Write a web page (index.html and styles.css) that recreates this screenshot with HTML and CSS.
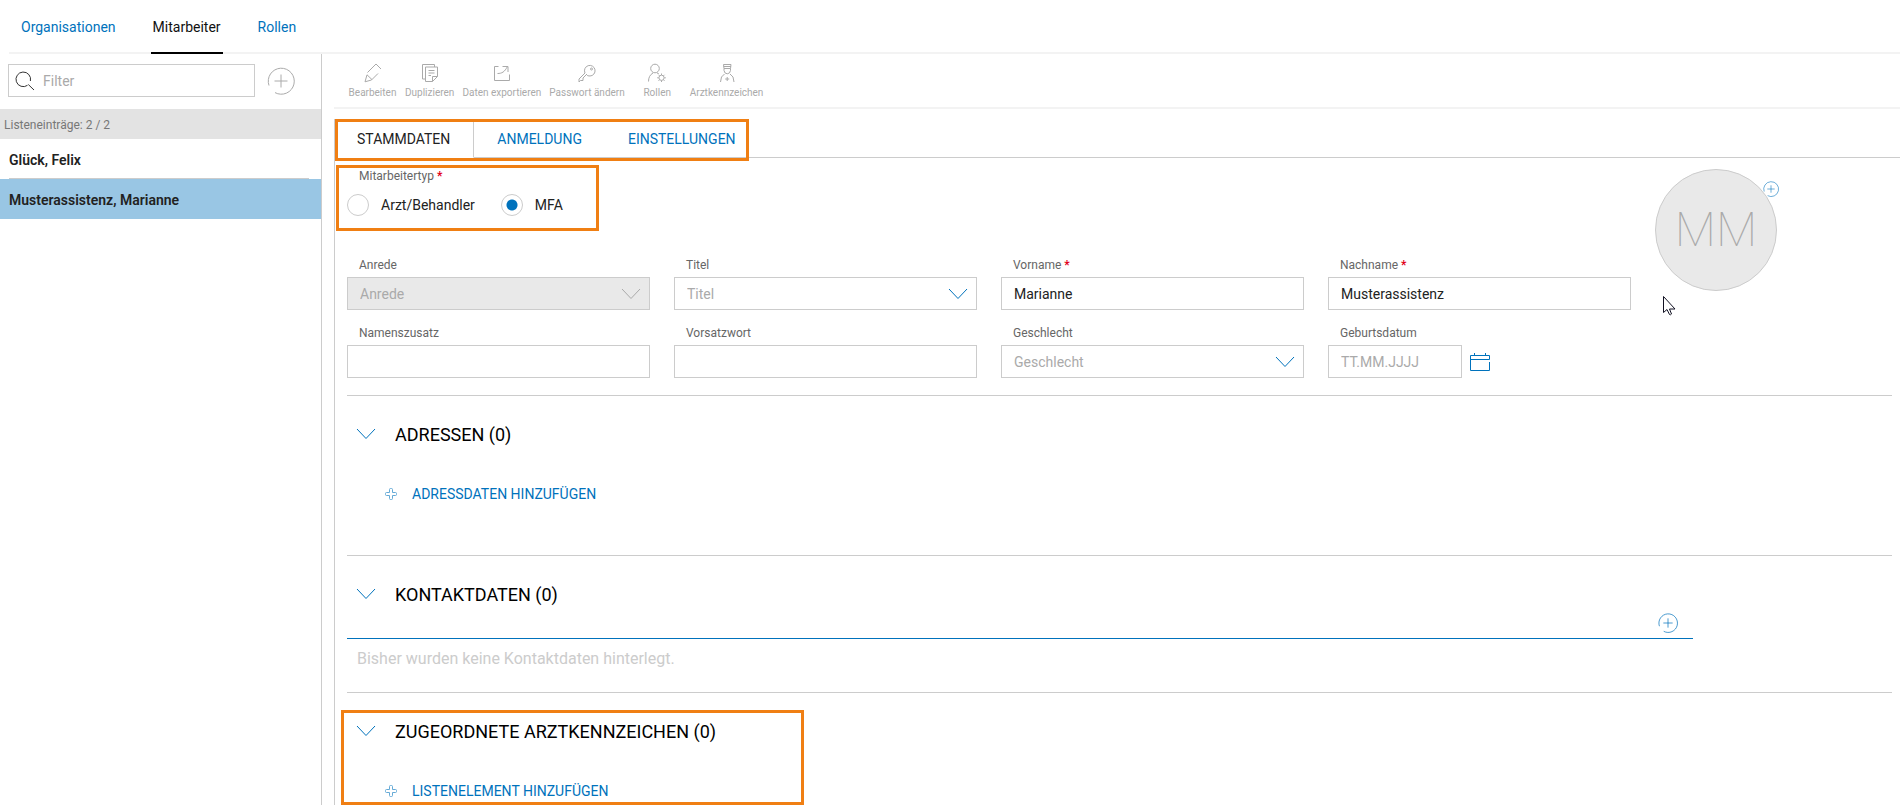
FILE: index.html
```
<!DOCTYPE html>
<html lang="de">
<head>
<meta charset="utf-8">
<title>Mitarbeiter</title>
<link rel="stylesheet" href="styles.css">
</head>
<body>
<svg class="defs" aria-hidden="true">
  <symbol id="chevron" viewBox="0 0 20 12"><path d="M1 1l9 9.500 9-9.500"/></symbol>
  <symbol id="circle-plus" viewBox="0 0 28 28"><path d="M2 18.500A13 13 0 1 1 8 25.600M14 7.500v13M7.500 14h13"/></symbol>
  <symbol id="cross" viewBox="0 0 12 12"><path d="M4.500 4.500v-3q0-1 1-1h1q1 0 1 1v3h3q1 0 1 1v1q0 1-1 1h-3v3q0 1-1 1h-1q-1 0-1-1v-3h-3q-1 0-1-1v-1q0-1 1-1z"/></symbol>
</svg>
<div class="app">
  <nav class="main-nav">
    <a class="main-nav-link" href="#organisationen">Organisationen</a>
    <a class="main-nav-link is-active" href="#mitarbeiter" aria-current="page">Mitarbeiter</a>
    <a class="main-nav-link" href="#rollen">Rollen</a>
  </nav>
  <div class="workspace">
    <aside class="sidebar">
      <div class="search-row">
        <div class="search">
          <svg class="search-icon" viewBox="0 0 20 20" aria-hidden="true"><path d="M12.500 14.300A7.300 7.300 0 1 1 15.400 10M13.300 13.500l5.700 5.500"/></svg>
          <input class="search-input" type="text" placeholder="Filter" aria-label="Filter">
        </div>
        <button class="icon-button" type="button" aria-label="Neuer Mitarbeiter"><svg class="icon-add"><use href="#circle-plus"/></svg></button>
      </div>
      <p class="list-count">Listeneinträge: 2 / 2</p>
      <ul class="people">
        <li class="person"><a class="person-link" href="#felix">Glück, Felix</a></li>
        <li class="person is-selected"><a class="person-link" href="#marianne">Musterassistenz, Marianne</a></li>
      </ul>
    </aside>
    <main class="content">
      <div class="toolbar">
        <button class="tool" type="button"><svg class="tool-icon" viewBox="0 0 20 20" aria-hidden="true"><path d="M4.500 9.500l8.500-8.500 5 5M15 10.500l-6.500 6.500-6.500 1.800 2-7 5 4.800"/></svg>Bearbeiten</button>
        <button class="tool" type="button"><svg class="tool-icon" viewBox="0 0 20 20" aria-hidden="true"><path d="M5 16H2.500V1.500h12V4M12.500 18.500H5.500V4h12v9.500l-5 5v-5h5M8.500 7.500h6M8.500 10h6M8.500 12.500h2.500"/></svg>Duplizieren</button>
        <button class="tool" type="button"><svg class="tool-icon" viewBox="0 0 20 20" aria-hidden="true"><path d="M6.500 3.500h-4v14h15v-6M5.500 10.500c4.500 0 7-1.500 10-7M10.500 3.500h5.500v5.500"/></svg>Daten exportieren</button>
        <button class="tool" type="button"><svg class="tool-icon" viewBox="0 0 20 20" aria-hidden="true"><path d="M9.500 11.500l-3.500 3.500v2.500H3.500l-1.500 1.500v-3l6-6A5.300 5.300 0 1 1 13 13q-2.500.500-4-2"/><circle cx="14.500" cy="6" r="1"/></svg>Passwort ändern</button>
        <button class="tool" type="button"><svg class="tool-icon" viewBox="0 0 20 20" aria-hidden="true"><circle cx="8" cy="5.500" r="4.300"/><path d="M1.500 18.500q0-6 4.500-8.500M10 10q1.500.500 2 1M14.500 10.500v1.500M14.500 17.500v1.500M10.200 14.800h1.500M17.300 14.800h1.500M11.500 11.800l1 1M16.500 16.800l1 1M17.500 11.800l-1 1M12.500 16.800l-1 1"/><circle cx="14.500" cy="14.800" r="2.600"/></svg>Rollen</button>
        <button class="tool" type="button"><svg class="tool-icon" viewBox="0 0 20 20" aria-hidden="true"><path d="M6.500 1.500h7.500l-.500 4h-6.500zM6.500 3.500h7.500M7 5.500v2a3.300 4 0 0 0 6.500 0v-2M7.500 11q-4 2-4 8M13 11q4 2 4 8M10.200 14v4M8.200 16h4"/></svg>Arztkennzeichen</button>
      </div>
      <div class="panel">
        <div class="tab-bar">
          <div class="tabs" role="tablist">
            <button class="tab is-active" type="button" role="tab" aria-selected="true">STAMMDATEN</button>
            <button class="tab" type="button" role="tab" aria-selected="false">ANMELDUNG</button>
            <button class="tab" type="button" role="tab" aria-selected="false">EINSTELLUNGEN</button>
            <span class="marker marker-tabs"></span>
          </div>
        </div>
        <form class="form">
          <div class="person-form">
            <div class="person-fields">
              <fieldset class="type">
                <legend class="type-legend">Mitarbeitertyp <span class="required">*</span></legend>
                <div class="type-options">
                  <label class="option"><input class="radio" type="radio" name="typ">Arzt/Behandler</label>
                  <label class="option"><input class="radio" type="radio" name="typ" checked>MFA</label>
                </div>
                <span class="marker marker-type"></span>
              </fieldset>
              <div class="fields">
                <div class="field">
                  <label class="label" for="anrede">Anrede</label>
                  <div class="select-box"><select class="control select" id="anrede" disabled><option>Anrede</option></select><svg class="chevron"><use href="#chevron"/></svg></div>
                </div>
                <div class="field">
                  <label class="label" for="titel">Titel</label>
                  <div class="select-box"><select class="control select" id="titel"><option>Titel</option></select><svg class="chevron"><use href="#chevron"/></svg></div>
                </div>
                <div class="field">
                  <label class="label" for="vorname">Vorname <span class="required">*</span></label>
                  <input class="control" id="vorname" type="text" value="Marianne">
                </div>
                <div class="field">
                  <label class="label" for="nachname">Nachname <span class="required">*</span></label>
                  <input class="control" id="nachname" type="text" value="Musterassistenz">
                </div>
                <div class="field">
                  <label class="label" for="zusatz">Namenszusatz</label>
                  <input class="control" id="zusatz" type="text">
                </div>
                <div class="field">
                  <label class="label" for="vorsatz">Vorsatzwort</label>
                  <input class="control" id="vorsatz" type="text">
                </div>
                <div class="field">
                  <label class="label" for="geschlecht">Geschlecht</label>
                  <div class="select-box"><select class="control select" id="geschlecht"><option>Geschlecht</option></select><svg class="chevron"><use href="#chevron"/></svg></div>
                </div>
                <div class="field">
                  <label class="label" for="geburt">Geburtsdatum</label>
                  <div class="date">
                    <input class="control date-input" id="geburt" type="text" placeholder="TT.MM.JJJJ">
                    <button class="icon-button" type="button" aria-label="Kalender"><svg class="calendar" viewBox="0 0 20 20"><path d="M19.500 10v8.500H.500v-15h19v4H.500M4.500 1v2.500M15.500 1v2.500"/></svg></button>
                  </div>
                </div>
              </div>
            </div>
            <div class="portrait">
              <div class="avatar">MM<button class="icon-button avatar-add" type="button" aria-label="Bild hinzufügen"><svg class="icon-add-small"><use href="#circle-plus"/></svg></button></div>
              <svg class="pointer" viewBox="0 0 13 20" aria-hidden="true"><path d="M.500.500v16l3.500-3 2.500 5q1 .800 2-.500l-2-5h5.500z"/></svg>
            </div>
          </div>
          <section class="section">
            <h2 class="section-title"><button class="section-toggle" type="button"><svg class="section-chevron"><use href="#chevron"/></svg>ADRESSEN (0)</button></h2>
            <button class="add-link" type="button"><svg class="cross"><use href="#cross"/></svg>ADRESSDATEN HINZUFÜGEN</button>
          </section>
          <section class="section">
            <h2 class="section-title"><button class="section-toggle" type="button"><svg class="section-chevron"><use href="#chevron"/></svg>KONTAKTDATEN (0)</button></h2>
            <div class="contact-head"><button class="icon-button" type="button" aria-label="Kontaktdaten hinzufügen"><svg class="icon-add-medium"><use href="#circle-plus"/></svg></button></div>
            <p class="empty">Bisher wurden keine Kontaktdaten hinterlegt.</p>
          </section>
          <section class="section">
            <h2 class="section-title"><button class="section-toggle" type="button"><svg class="section-chevron"><use href="#chevron"/></svg>ZUGEORDNETE ARZTKENNZEICHEN (0)</button></h2>
            <button class="add-link" type="button"><svg class="cross"><use href="#cross"/></svg>LISTENELEMENT HINZUFÜGEN</button>
            <span class="marker marker-section"></span>
          </section>
        </form>
      </div>
    </main>
  </div>
</div>
</body>
</html>
```

FILE: styles.css
```
* {
  box-sizing: border-box;
}

body {
  margin: 0;
  background: #fff;
  color: #222;
  font: 14px/20px Roboto, "Liberation Sans", sans-serif;
}

button,
input,
select {
  font: inherit;
  color: inherit;
  margin: 0;
}

button {
  padding: 0;
  border: 0;
  background: none;
  cursor: pointer;
}

svg {
  display: block;
  fill: none;
  stroke: currentColor;
}

.defs {
  position: absolute;
  width: 0;
  height: 0;
}

.app {
  display: flex;
  flex-direction: column;
  height: 100vh;
  overflow: hidden;
}

/* Main navigation */
.main-nav {
  display: flex;
  gap: 33px;
  margin-left: 9px;
  padding-left: 10px;
  border-bottom: 2px solid #f3f3f3;
}

.main-nav-link {
  margin-bottom: -2px;
  padding: 17px 2px 15px;
  border-bottom: 2px solid transparent;
  color: #0072bc;
  text-decoration: none;
}

.main-nav-link.is-active {
  border-color: #000;
  color: #111;
}

.workspace {
  display: flex;
  flex: 1;
  min-height: 0;
}

/* Sidebar */
.sidebar {
  flex: none;
  width: 322px;
  border-right: 1px solid #ccc;
}

.search-row {
  display: flex;
  align-items: center;
  gap: 12px;
  padding: 10px 26px 12px 8px;
}

.search {
  display: flex;
  flex: 1;
  align-items: center;
  gap: 6px;
  height: 33px;
  padding-left: 6px;
  border: 1px solid #ccc;
}

.search-icon {
  width: 20px;
  height: 20px;
  color: #333;
}

.search-input {
  flex: 1;
  min-width: 0;
  padding: 0 2px;
  border: 0;
  outline: 0;
  background: none;
}

::placeholder {
  color: #aaa;
  opacity: 1;
}

.icon-button {
  color: #0072bc;
}

.search-row .icon-button {
  color: #aaa;
}

.icon-add {
  width: 28px;
  height: 28px;
}

.list-count {
  margin: 0;
  padding: 6px 4px 4px;
  background: #e3e3e3;
  color: #777;
  font-size: 12px;
}

.people {
  margin: 0;
  padding: 0;
  list-style: none;
  font-weight: 600;
}

.person-link {
  display: block;
  padding: 11px 0 8px;
  margin: 0 12px 0 9px;
  border-bottom: 1px solid #ccc;
  color: #222;
  text-decoration: none;
}

.is-selected {
  background: #99c6e4;
}

.is-selected .person-link {
  border-color: transparent;
}

/* Toolbar */
.content {
  display: flex;
  flex: 1;
  flex-direction: column;
  min-width: 0;
  padding-left: 12px;
}

.toolbar {
  display: flex;
  gap: 8px;
  padding: 9px 0 8px 14px;
  border-bottom: 2px solid #f3f3f3;
}

.tool {
  display: flex;
  flex-direction: column;
  align-items: center;
  gap: 4px;
  min-width: 49px;
  color: #aaa;
  font-size: 10px;
  line-height: 12px;
}

.tool-icon {
  width: 20px;
  height: 20px;
}

/* Detail panel */
.panel {
  flex: 1;
  min-height: 0;
  margin-top: 10px;
  border-left: 1px solid #ccc;
}

.tab-bar {
  border-bottom: 1px solid #ccc;
}

.tabs {
  position: relative;
  display: inline-flex;
  vertical-align: top;
  margin-bottom: -1px;
}

.tab {
  padding: 10px 23px 8px;
  border-bottom: 1px solid transparent;
  color: #0072bc;
}

.tab.is-active {
  padding-left: 22px;
  border-right: 1px solid #ccc;
  border-bottom-color: #fff;
  background: #fff;
  color: #222;
}

.marker {
  position: absolute;
  border: 3px solid #f07f13;
  pointer-events: none;
}

.marker-tabs {
  inset: 0 10px -3px 0;
}

.form {
  padding: 8px 8px 0 12px;
}

.person-form {
  display: flex;
  gap: 24px;
  padding-bottom: 17px;
}

.person-fields {
  flex: 1;
  min-width: 0;
}

.type {
  position: relative;
  min-width: 0;
  margin: 0;
  padding: 0;
  border: 0;
}

.type-legend {
  padding: 0 12px;
  color: #666;
  font-size: 12px;
}

.required {
  color: #e2001a;
  font-weight: 700;
}

.type-options {
  display: flex;
  gap: 26px;
  padding-top: 8px;
}

.option {
  display: flex;
  align-items: center;
  gap: 12px;
}

.radio {
  appearance: none;
  width: 22px;
  height: 22px;
  border: 1px solid #ccc;
  border-radius: 50%;
  background: #fff;
}

.radio:checked {
  background: radial-gradient(circle, #0072bc 5px, #fff 6px);
}

.marker-type {
  top: -21px;
  left: -11px;
  width: 263px;
  height: 66px;
}

.fields {
  display: grid;
  grid-template-columns: repeat(4, minmax(0, 1fr));
  gap: 13px 24px;
  margin-top: 39px;
}

.label {
  display: block;
  margin-bottom: 2px;
  padding-left: 12px;
  color: #666;
  font-size: 12px;
}

.control {
  display: block;
  width: 100%;
  height: 33px;
  padding: 0 12px;
  border: 1px solid #ccc;
  border-radius: 0;
  background: #fff;
}

.select {
  appearance: none;
  color: #aaa;
}

.select:disabled {
  background: #e9e9e9;
  opacity: 1;
}

.select-box {
  position: relative;
  color: #0072bc;
}

.chevron {
  position: absolute;
  top: 11px;
  right: 9px;
  width: 20px;
  height: 12px;
  pointer-events: none;
}

.select:disabled + .chevron {
  color: #aaa;
}

.date {
  display: flex;
  align-items: center;
  gap: 8px;
}

.date-input {
  width: 134px;
}

.calendar {
  width: 20px;
  height: 20px;
}

.portrait {
  flex: none;
  width: 237px;
  padding-top: 3px;
}

.avatar {
  position: relative;
  display: flex;
  align-items: center;
  justify-content: center;
  width: 122px;
  height: 122px;
  border: 1px solid #ccc;
  border-radius: 50%;
  background: #e9e9e9;
  color: #aaa;
  font-size: 48px;
  font-weight: 100;
}

.avatar-add {
  position: absolute;
  top: 11px;
  right: -3px;
}

.icon-add-small {
  width: 16px;
  height: 16px;
}

.pointer {
  width: 13px;
  height: 20px;
  margin: 5px 0 0 8px;
  color: #112;
  fill: #fff;
}

/* Collapsible sections */
.section {
  position: relative;
  height: 160px;
  border-top: 1px solid #ccc;
  padding-top: 26px;
}

.section:nth-of-type(2) {
  height: 137px;
}

.section-title {
  margin: 0;
  font-weight: 400;
}

.section-toggle {
  display: flex;
  align-items: center;
  gap: 19px;
  padding-left: 9px;
  color: #000;
  font-size: 18px;
  line-height: 26px;
}

.section-chevron {
  width: 20px;
  height: 12px;
  margin-bottom: 2px;
  color: #0072bc;
}

.add-link {
  display: flex;
  align-items: center;
  gap: 15px;
  margin: 36px 0 0 38px;
  color: #0072bc;
}

.cross {
  width: 12px;
  height: 12px;
  opacity: 0.6;
}

.contact-head {
  display: flex;
  justify-content: flex-end;
  margin-right: 199px;
  padding: 5px 15px;
  border-bottom: 1px solid #0072bc;
}

.icon-add-medium {
  width: 20px;
  height: 20px;
}

.empty {
  margin: 10px 0 0 10px;
  color: #ccc;
  font-size: 16px;
}

.marker-section {
  top: 17px;
  left: -6px;
  width: 463px;
  height: 95px;
}
```
